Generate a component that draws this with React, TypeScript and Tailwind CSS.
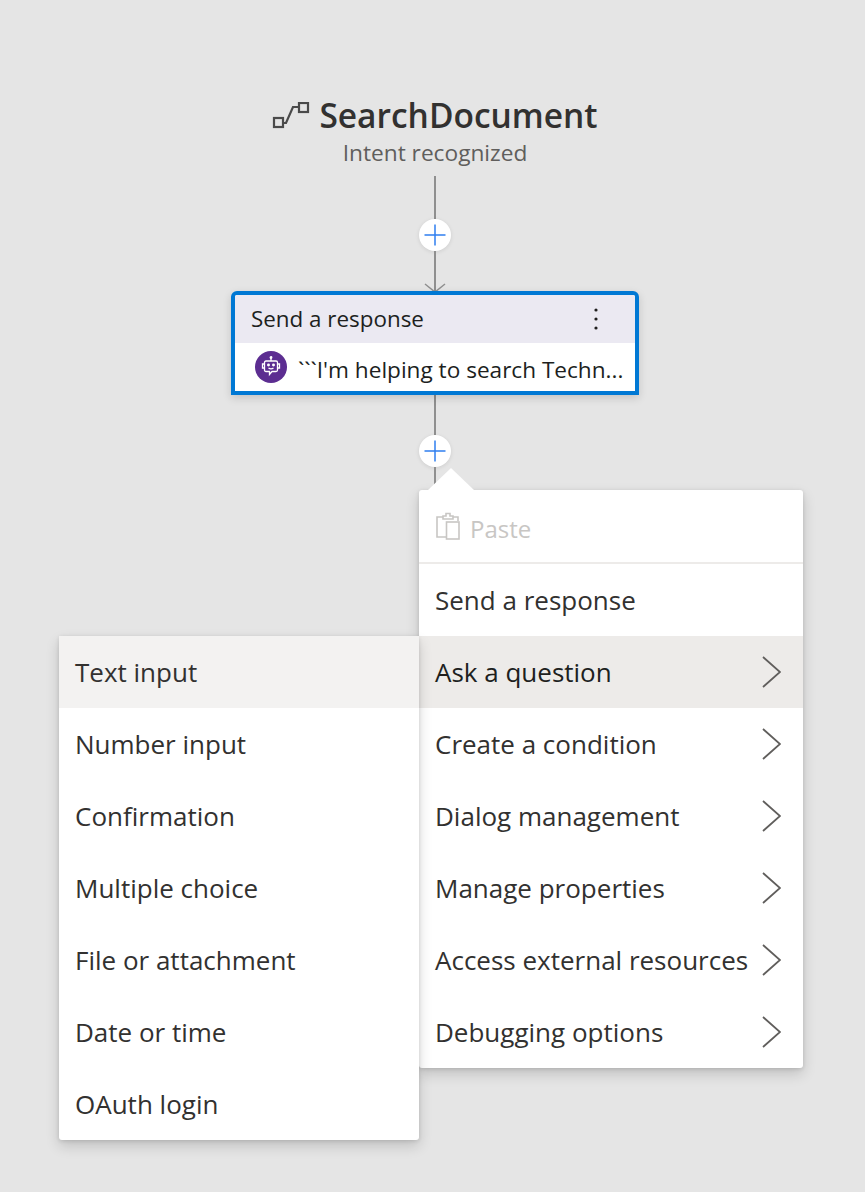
const font = "font-['Open_Sans',sans-serif]";

const mainItems = [
  { label: "Send a response", arrow: false },
  { label: "Ask a question", arrow: true, active: true },
  { label: "Create a condition", arrow: true },
  { label: "Dialog management", arrow: true },
  { label: "Manage properties", arrow: true },
  { label: "Access external resources", arrow: true },
  { label: "Debugging options", arrow: true },
];

const subItems = ["Text input", "Number input", "Confirmation", "Multiple choice", "File or attachment", "Date or time", "OAuth login"];

const Line = ({ height }: { height: string }) => <div className={`w-0.5 bg-[#8f8f8f] ${height}`} />;

const PlusButton = () => (
  <div className="w-8 h-8 rounded-full bg-white flex items-center justify-center shadow-[0_1px_4px_rgba(0,0,0,0.1)]">
    <svg width="22" height="22" viewBox="0 0 22 22" fill="none" stroke="#2f7ff0" strokeWidth="1.5">
      <path d="M11 0.5V21.5M0.5 11H21.5" />
    </svg>
  </div>
);

const Chevron = () => (
  <svg width="19" height="32" viewBox="0 0 19 32" fill="none" stroke="#605e5c" strokeWidth="1.8">
    <path d="M1 1L18 16L1 31" />
  </svg>
);

const TriggerIcon = () => (
  <svg width="38" height="28" viewBox="0 0 38 28" fill="none" stroke="#4a4a4a" strokeWidth="2.2">
    <rect x="2" y="16" width="9" height="9" />
    <rect x="27" y="1" width="9" height="9" />
    <path d="M11 21H14L21 5H27" />
  </svg>
);

const BotIcon = () => (
  <div className="w-8 h-8 rounded-full bg-[#5c2d91] flex items-center justify-center shrink-0">
    <svg width="20" height="22" viewBox="0 0 20 22" fill="none" stroke="white" strokeWidth="1.3">
      <path d="M10 1V5" />
      <circle cx="10" cy="1.5" r="0.8" fill="white" />
      <path d="M5 5H15Q16.5 5 16.5 6.5V14Q16.5 15.5 15 15.5H11L8.5 18.5V15.5H5Q3.5 15.5 3.5 14V6.5Q3.5 5 5 5Z" />
      <path d="M3.5 8H1.5V12H3.5M16.5 8H18.5V12H16.5" />
      <circle cx="7.5" cy="9" r="0.8" fill="white" />
      <circle cx="12.5" cy="9" r="0.8" fill="white" />
      <path d="M7.5 12Q10 13.8 12.5 12" />
    </svg>
  </div>
);

const PasteIcon = () => (
  <svg width="26" height="29" viewBox="0 0 26 29" fill="none" stroke="#c8c6c4" strokeWidth="1.6">
    <path d="M8 5H2V25H11" />
    <path d="M18 5H23V9" />
    <path d="M8 7V4H11V1.5H15V4H18V7Z" />
    <rect x="11.5" y="10" width="12.5" height="17" />
  </svg>
);

export default function App() {
  return (
    <div className={`relative w-[865px] h-[1192px] overflow-hidden bg-[#e5e5e5] ${font}`}>
      {/* Flow */}
      <div className="flex flex-col items-center pt-[92px] pl-[5px]">
        <div className="flex items-center h-12">
          <TriggerIcon />
          <h1 className="ml-[9px] text-[33.5px] font-semibold leading-none text-[#323130]">SearchDocument</h1>
        </div>
        <p className="pt-px text-[22.7px] leading-[24px] text-[#605e5c]">Intent recognized</p>
        <div className="mt-[11px]">
          <Line height="h-[43px]" />
        </div>
        <PlusButton />
        <div className="relative flex justify-center">
          <Line height="h-10" />
          <svg className="absolute top-[32px]" width="22" height="10" viewBox="0 0 22 10" fill="none" stroke="#8f8f8f" strokeWidth="1.5">
            <path d="M1 1L11 9L21 1" />
          </svg>
        </div>

        <div className="relative w-[408px] h-[104px] border-4 border-[#0078d4] rounded-t-[6px] bg-white shadow-[0_3px_8px_rgba(0,0,0,0.15)]">
          <div className="flex items-center justify-between h-12 pl-4 pr-[37px] bg-[#ebe9f2] rounded-t-[2px]">
            <span className="text-[22.4px] text-[#201f1e]">Send a response</span>
            <svg width="4" height="22" viewBox="0 0 4 22" fill="#201f1e">
              <circle cx="2" cy="2" r="1.6" />
              <circle cx="2" cy="11" r="1.6" />
              <circle cx="2" cy="20" r="1.6" />
            </svg>
          </div>
          <div className="flex items-center gap-[11px] h-12 pl-5">
            <BotIcon />
            <span className="pt-1.5 text-[22.6px] whitespace-nowrap text-[#201f1e]">```I'm helping to search Techn...</span>
          </div>
        </div>

        <Line height="h-10" />
        <PlusButton />
        <Line height="h-[23px]" />
      </div>

      {/* Main menu */}
      <div className="absolute left-[419px] top-[490px] w-[384px] bg-white rounded-[3px] shadow-[0_6px_14px_rgba(0,0,0,0.16),0_1px_4px_rgba(0,0,0,0.12)]">
        <div className="absolute left-[9px] top-[-22px] w-0 h-0 border-x-[23px] border-x-transparent border-b-[22px] border-b-white" />
        <div className="flex items-center h-[74px] pl-4 gap-[9px] border-b-2 border-[#edebe9]">
          <PasteIcon />
          <span className="pt-1.5 text-[24px] text-[#c8c6c4]">Paste</span>
        </div>
        {mainItems.map((item) => (
          <div
            key={item.label}
            className={`flex items-center justify-between h-[72px] pl-4 pr-[22px] text-[26px] ${
              item.active ? "bg-[#edebe9] text-[#201f1e]" : "text-[#323130]"
            }`}
          >
            <span className="whitespace-nowrap">{item.label}</span>
            {item.arrow && <Chevron />}
          </div>
        ))}
      </div>

      {/* Submenu */}
      <div className="absolute left-[59px] top-[636px] w-[360px] bg-white rounded-[3px] shadow-[0_6px_14px_rgba(0,0,0,0.16),0_1px_4px_rgba(0,0,0,0.12)]">
        {subItems.map((label, i) => (
          <div key={label} className={`flex items-center h-[72px] pl-4 text-[26px] text-[#323130] ${i === 0 ? "bg-[#f3f2f1]" : ""}`}>
            {label}
          </div>
        ))}
      </div>
    </div>
  );
}
